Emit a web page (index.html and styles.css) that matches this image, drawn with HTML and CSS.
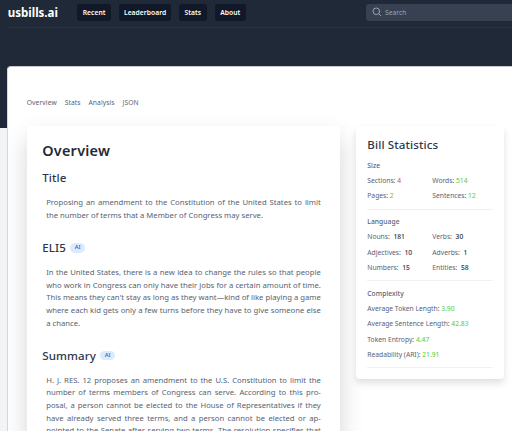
FILE: index.html
```html
<!DOCTYPE html>
<html lang="en">
<head>
<meta charset="utf-8">
<title>usbills.ai</title>
<link rel="stylesheet" href="styles.css">
</head>
<body>
<header class="top">
  <div class="bar">
    <div class="logo">usbills.ai</div>
    <nav class="menu">
      <a class="recent">Recent</a><a class="leader">Leaderboard</a><a class="stat">Stats</a><a class="about">About</a>
    </nav>
    <div class="search">
      <svg viewBox="0 0 20 20" width="10" height="10" fill="none" stroke="#9ca3af" stroke-width="2" stroke-linecap="round"><circle cx="8.6" cy="8.6" r="6.6"/><path d="M13.5 13.5l4 4"/></svg>
      <span>Search</span>
    </div>
  </div>
</header>
<main class="sheet">
  <nav class="tabs"><a>Overview</a><a>Stats</a><a>Analysis</a><a>JSON</a></nav>
  <div class="columns">
    <article class="card bill">
      <h1>Overview</h1>
      <h2>Title</h2>
      <p><span>Proposing an amendment to the Constitution of the United States to limit</span><span>the number of terms that a Member of Congress may serve.</span></p>
      <h2>ELI5 <b class="badge">AI</b></h2>
      <p><span>In the United States, there is a new idea to change the rules so that people</span><span>who work in Congress can only have their jobs for a certain amount of time.</span><span>This means they can't stay as long as they want—kind of like playing a game</span><span>where each kid gets only a few turns before they have to give someone else</span><span>a chance.</span></p>
      <h2>Summary <b class="badge">AI</b></h2>
      <p><span>H. J. RES. 12 proposes an amendment to the U.S. Constitution to limit the</span><span>number of terms members of Congress can serve. According to this pro-</span><span>posal, a person cannot be elected to the House of Representatives if they</span><span>have already served three terms, and a person cannot be elected or ap-</span><span class="full">pointed to the Senate after serving two terms. The resolution specifies that</span></p>
    </article>
    <aside class="card stats">
      <h3>Bill Statistics</h3>
      <section>
        <h4>Size</h4>
        <div class="grid">
          <div>Sections: <i class="red">4</i></div><div>Words: <i class="green">514</i></div>
          <div>Pages: <i class="green">2</i></div><div>Sentences: <i class="green">12</i></div>
        </div>
      </section>
      <section>
        <h4>Language</h4>
        <div class="grid">
          <div>Nouns: <i class="dark">181</i></div><div>Verbs: <i class="dark">30</i></div>
          <div>Adjectives: <i class="dark">10</i></div><div>Adverbs: <i class="dark">1</i></div>
          <div>Numbers: <i class="dark">15</i></div><div>Entities: <i class="dark">58</i></div>
        </div>
      </section>
      <section>
        <h4>Complexity</h4>
        <div class="grid single">
          <div>Average Token Length: <i class="green">3.90</i></div>
          <div>Average Sentence Length: <i class="green">42.83</i></div>
          <div>Token Entropy: <i class="green">4.47</i></div>
          <div>Readability (ARI): <i class="green">21.91</i></div>
        </div>
      </section>
    </aside>
  </div>
</main>
</body>
</html>
```

FILE: styles.css
```css
* { box-sizing: border-box; }
html, body { height: 431px; overflow: hidden; }
body { margin: 0; background: #f3f4f6; color: #596271; font-family: "Noto Sans", sans-serif; font-size: 6.73px; }
h1, h2, h3, h4, p { margin: 0; }
i { font-style: normal; }
.top { height: 128px; background: #1f2937; padding-left: 7.7px; }
.bar { display: flex; align-items: flex-start; height: 28px; padding-top: 4px; border-bottom: 1px solid #2b3645; }
.logo { flex: none; width: 69.4px; color: #fff; font-size: 11.54px; font-weight: 700; line-height: 17px; white-space: nowrap; }
.menu { display: flex; flex: none; gap: 8px; }
.menu a { height: 17px; border-radius: 3px; background: #111827; color: #fff; font-weight: 600; line-height: 17px; text-align: center; letter-spacing: .04px; }
.recent { width: 34px; }
.leader { width: 52px; }
.stat { width: 27.5px; }
.about { width: 31.5px; }
.search { display: flex; align-items: center; flex: 1; gap: 3px; height: 17.5px; margin-left: 120px; margin-top: -0.5px; padding-left: 6px; border-radius: 3px 0 0 3px; background: #374151; color: #9ca3af; }
.sheet { position: relative; height: 365px; margin: -62px 0 0 7px; padding: 28.5px 0 0 18.8px; border: 1px solid #c5c7cb; border-width: 1px 0 0 1px; border-left-color: #d5d7da; border-radius: 4px 0 0 0; background: #fff; overflow: hidden; }
.tabs { display: flex; gap: 7.9px; height: 30.5px; line-height: 13px; letter-spacing: .08px; }
.columns { display: flex; align-items: flex-start; gap: 15.5px; }
.card { flex: none; border-radius: 4px; background: #fff; }
.bill { width: 313.5px; height: 480px; padding: 15px 19.5px 0 15.4px; box-shadow: 0 12px 24px rgba(0, 0, 0, .17); }
h1 { height: 19px; color: #1f2937; font-size: 14.42px; font-weight: 600; line-height: 19px; letter-spacing: .26px; }
h2 { display: flex; align-items: center; gap: 4px; height: 16px; margin-top: 10px; color: #2d3748; font-size: 11.54px; font-weight: 500; line-height: 16px; letter-spacing: .12px; }
.badge { width: 15.4px; height: 9.5px; border-radius: 5px; background: #dbeafe; color: #4459bd; font-size: 5.77px; font-weight: 500; line-height: 9.5px; letter-spacing: 0; text-align: center; }
.bill p { margin: 10.3px 0 18.4px; padding-left: 4px; font-size: 7.69px; line-height: 12.6px; }
.bill p span { display: block; white-space: nowrap; text-align: justify; text-align-last: justify; }
.bill p span:last-child:not(.full) { text-align-last: left; }
.stats { position: relative; width: 148.5px; height: 253px; padding: 10px 11.5px 0; box-shadow: 0 4px 7px rgba(0, 0, 0, .13); }
h3 { height: 17px; color: #2d3748; font-size: 11.54px; font-weight: 500; line-height: 17px; letter-spacing: .12px; }
section { border-bottom: 1px solid #f0f1f3; padding: 7.7px 0 4.8px; }
h3 + section { padding-top: 8px; }
h4 { height: 10px; font-size: 6.73px; font-weight: 500; line-height: 10px; letter-spacing: .05px; }
.grid { display: grid; grid-template-columns: 65px 1fr; grid-auto-rows: 15.4px; line-height: 15.4px; padding-top: 2px; white-space: nowrap; }
.single { grid-template-columns: 1fr; }
.red { color: #e0453a; }
.green { color: #55cc33; }
.dark { margin-left: 1.9px; color: #2d3748; font-weight: 500; }
```
